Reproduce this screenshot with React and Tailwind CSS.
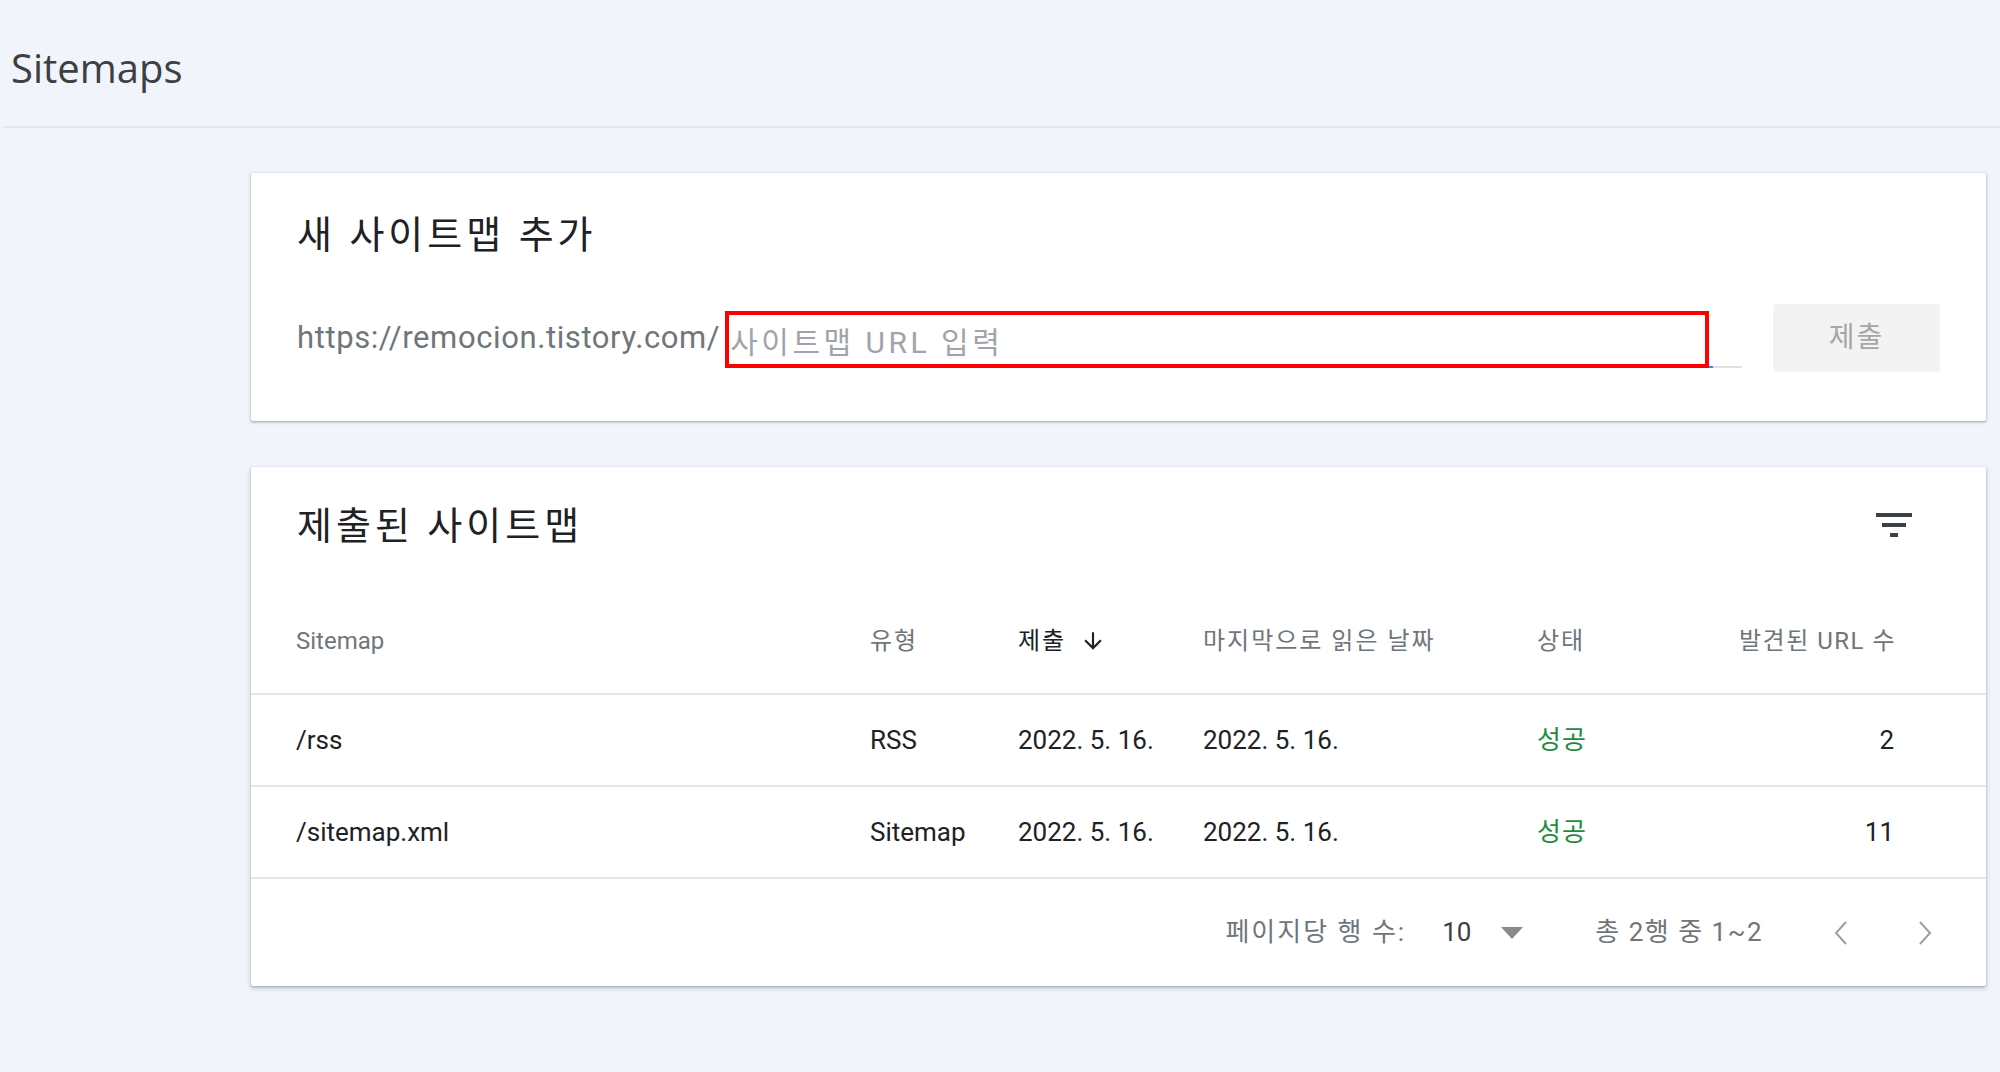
import React from "react";

const KR = "font-['Roboto','Noto_Sans_CJK_KR',sans-serif]";

function FilterIcon() {
  return (
    <svg width="48" height="48" viewBox="0 0 24 24" fill="#3c4043">
      <path d="M10 18h4v-2h-4v2zM3 6v2h18V6H3zm3 7h12v-2H6v2z" />
    </svg>
  );
}

function ArrowDown() {
  return (
    <svg width="26" height="26" viewBox="0 0 24 24" fill="#202124">
      <path d="M20 12l-1.41-1.41L13 16.17V4h-2v12.17l-5.58-5.59L4 12l8 8 8-8z" />
    </svg>
  );
}

function Chevron({ dir }) {
  return (
    <svg width="18" height="28" viewBox="0 0 18 28" fill="none" stroke="#9aa0a6" strokeWidth="2">
      {dir === "left" ? <polyline points="14,3 4,14 14,25" /> : <polyline points="4,3 14,14 4,25" />}
    </svg>
  );
}

const rows = [
  { path: "/rss", type: "RSS", sub: "2022. 5. 16.", read: "2022. 5. 16.", status: "성공", count: "2" },
  { path: "/sitemap.xml", type: "Sitemap", sub: "2022. 5. 16.", read: "2022. 5. 16.", status: "성공", count: "11" },
];

export default function App() {
  return (
    <div className={`min-h-[1072px] w-full bg-[#f1f4fb] ${KR}`}>
      <div className="h-[128px] flex items-center pl-[8px] ml-[3px] border-b-2 border-[#e3e6ea]">
        <h1 className="text-[40px] text-[#3c4043] font-['Open_Sans','Noto_Sans_CJK_KR',sans-serif] mt-[10px]">Sitemaps</h1>
      </div>

      <div className="pl-[251px] pr-[14px] pt-[45px] flex flex-col gap-[46px]">
        {/* Card 1 */}
        <div className="bg-white h-[248px] rounded-[2px] shadow-[0_1px_2px_rgba(60,64,67,0.3),0_1px_3px_1px_rgba(60,64,67,0.15)] px-[46px]">
          <div className="h-[118px] flex items-center pt-[6px]">
            <h2 className="text-[38px] text-[#202124] tracking-[4px]">새 사이트맵 추가</h2>
          </div>
          <div className="flex items-center h-[68px] mt-[13px]">
            <span className="text-[31px] text-[#70757a] whitespace-nowrap tracking-[0.6px]">https://remocion.tistory.com/</span>
            <div className="relative flex-1 ml-[5px] h-[57px] flex items-center border-b-2 border-[#e0e0e0] mt-[2px]">
              <span className="text-[30px] text-[#a0a4a8] pl-[5px] pt-[8px] tracking-[3.5px]">사이트맵 URL 입력</span>
              <div className="absolute left-0 bottom-[-2px] h-[2px] w-[988px] bg-[#4285f4]" />
              <div className="absolute left-0 top-0 w-[984px] h-[57px] border-[4px] border-[#ff0000]" />
            </div>
            <button className="ml-[31px] w-[167px] h-[68px] rounded-[4px] bg-[#f3f3f3] text-[28px] text-[#a6a6a6] tracking-[2px]">제출</button>
          </div>
        </div>

        {/* Card 2 */}
        <div className="bg-white rounded-[2px] shadow-[0_1px_2px_rgba(60,64,67,0.3),0_2px_4px_1px_rgba(60,64,67,0.18)]">
          <div className="h-[116px] flex items-center justify-between pl-[46px] pr-[68px]">
            <h2 className="text-[38px] text-[#202124] tracking-[4px] mt-[2px]">제출된 사이트맵</h2>
            <FilterIcon />
          </div>

          <div className="h-[112px] grid grid-cols-[574px_148px_185px_334px_1fr_220px] items-center pl-[45px] pr-[92px] pt-[5px] border-b-2 border-[#e6e6e6] text-[24px] text-[#70757a]">
            <span>Sitemap</span>
            <span className="tracking-[2px]">유형</span>
            <span className="flex items-center gap-[14px] text-[#202124] tracking-[2px]">제출 <ArrowDown /></span>
            <span className="tracking-[2px]">마지막으로 읽은 날짜</span>
            <span className="tracking-[2px]">상태</span>
            <span className="text-right tracking-[1.5px] -mr-[2px]">발견된 URL 수</span>
          </div>

          {rows.map((r) => (
            <div key={r.path} className="h-[92px] grid grid-cols-[574px_148px_185px_334px_1fr_220px] items-center pl-[45px] pr-[92px] border-b-2 border-[#e6e6e6] text-[26px] text-[#202124]">
              <span>{r.path}</span>
              <span>{r.type}</span>
              <span>{r.sub}</span>
              <span>{r.read}</span>
              <span className="text-[#1e8e3e] tracking-[1px]">{r.status}</span>
              <span className="text-right">{r.count}</span>
            </div>
          ))}

          <div className="h-[107px] flex items-center justify-end pr-[52px] text-[26px] text-[#70757a]">
            <span className="tracking-[2px]">페이지당 행 수:</span>
            <span className="ml-[36px] text-[#3c4043]">10</span>
            <svg className="ml-[30px]" width="22" height="12" viewBox="0 0 22 12"><polygon points="0,0 22,0 11,12" fill="#8a8a8a" /></svg>
            <span className="ml-[72px] tracking-[1.5px]">총 2행 중 1~2</span>
            <span className="ml-[69px] flex"><Chevron dir="left" /></span>
            <span className="ml-[66px] flex"><Chevron dir="right" /></span>
          </div>
        </div>
      </div>
    </div>
  );
}
